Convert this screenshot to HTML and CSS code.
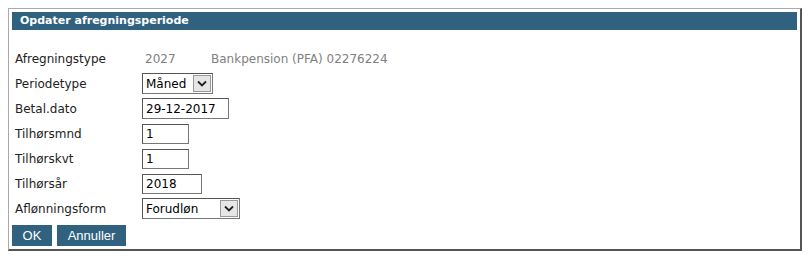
FILE: index.html
```html
<!DOCTYPE html>
<html lang="da">
<head>
<meta charset="utf-8">
<title>Opdater afregningsperiode</title>
<link rel="stylesheet" href="styles.css">
</head>
<body>
<div class="panel">
  <div class="panel-title">Opdater afregningsperiode</div>
  <form class="form">
    <div class="row info">
      <span class="label">Afregningstype</span>
      <span class="value code">2027</span>
      <span class="value">Bankpension (PFA) 02276224</span>
    </div>
    <div class="row">
      <span class="label">Periodetype</span>
      <span class="select w-periode">
        <select><option>Måned</option></select>
        <span class="arrow"><svg width="12" height="9" viewBox="0 0 12 9"><path d="M2 2.5 L6 6.5 L10 2.5" fill="none" stroke="#222" stroke-width="1.8"/></svg></span>
      </span>
    </div>
    <div class="row">
      <span class="label">Betal.dato</span>
      <input class="text w-dato" value="29-12-2017">
    </div>
    <div class="row">
      <span class="label">Tilhørsmnd</span>
      <input class="text w-small" value="1">
    </div>
    <div class="row">
      <span class="label">Tilhørskvt</span>
      <input class="text w-small" value="1">
    </div>
    <div class="row">
      <span class="label">Tilhørsår</span>
      <input class="text w-year" value="2018">
    </div>
    <div class="row">
      <span class="label">Aflønningsform</span>
      <span class="select w-form">
        <select><option>Forudløn</option></select>
        <span class="arrow"><svg width="12" height="9" viewBox="0 0 12 9"><path d="M2 2.5 L6 6.5 L10 2.5" fill="none" stroke="#222" stroke-width="1.8"/></svg></span>
      </span>
    </div>
    <div class="buttons">
      <button type="button" class="btn btn-ok">OK</button>
      <button type="button" class="btn">Annuller</button>
    </div>
  </form>
</div>
</body>
</html>
```

FILE: styles.css
```css
html, body {
  margin: 0;
  padding: 0;
  background: #fff;
}
body {
  padding: 8px;
  font-family: "DejaVu Sans", Verdana, sans-serif;
  font-size: 12px;
  color: #222;
}
.panel {
  width: 794px;
  height: 243px;
  box-sizing: border-box;
  border-top: 1px solid #aaa;
  border-left: 1px solid #aaa;
  border-right: 2px solid #555;
  border-bottom: 2px solid #555;
  padding: 3px;
}
.panel-title {
  background: #30617f;
  color: #fff;
  font-weight: bold;
  font-size: 11px;
  height: 18px;
  line-height: 18px;
  padding-left: 8px;
}
.form {
  padding-top: 17px;
}
.row {
  display: flex;
  align-items: center;
  height: 25px;
}
.label {
  width: 127px;
  padding-left: 3px;
  flex: none;
}
.info {
  height: 24px;
}
.value {
  color: #808080;
}
.value.code {
  width: 66px;
  padding-left: 3px;
}
.text {
  box-sizing: border-box;
  height: 20px;
  margin: 0;
  border: 1px solid #777;
  border-top-color: #555;
  border-left-color: #555;
  padding: 0 3px;
  font-family: "DejaVu Sans", Verdana, sans-serif;
  font-size: 12px;
  color: #000;
  background: #fff;
}
.w-dato { width: 87px; height: 21px; }
.w-small { width: 47px; }
.w-year { width: 60px; }
.select {
  display: inline-flex;
  align-items: center;
  box-sizing: border-box;
  height: 21px;
  border: 1px solid #777;
  border-top-color: #555;
  border-left-color: #555;
  background: #fff;
  padding-right: 1px;
}
.select select {
  appearance: none;
  -webkit-appearance: none;
  border: 0;
  background: transparent;
  font-family: "DejaVu Sans", Verdana, sans-serif;
  font-size: 12px;
  color: #000;
  padding: 0 3px;
  margin: 0;
  flex: 1;
  min-width: 0;
  height: 19px;
  outline: none;
}
.w-periode { width: 71px; }
.w-form { width: 98px; }
.arrow {
  box-sizing: border-box;
  width: 18px;
  height: 17px;
  border: 1px solid #999;
  background: #e6e6e6;
  display: flex;
  align-items: center;
  justify-content: center;
  flex: none;
}
.buttons {
  display: flex;
  gap: 5px;
  margin-top: 4px;
}
.btn {
  background: #30617f;
  color: #fff;
  border: 0;
  height: 21px;
  width: 69px;
  padding: 0;
  font-family: "Liberation Sans", Arial, sans-serif;
  font-size: 13px;
  margin: 0;
}
.btn-ok {
  width: 40px;
}
```
